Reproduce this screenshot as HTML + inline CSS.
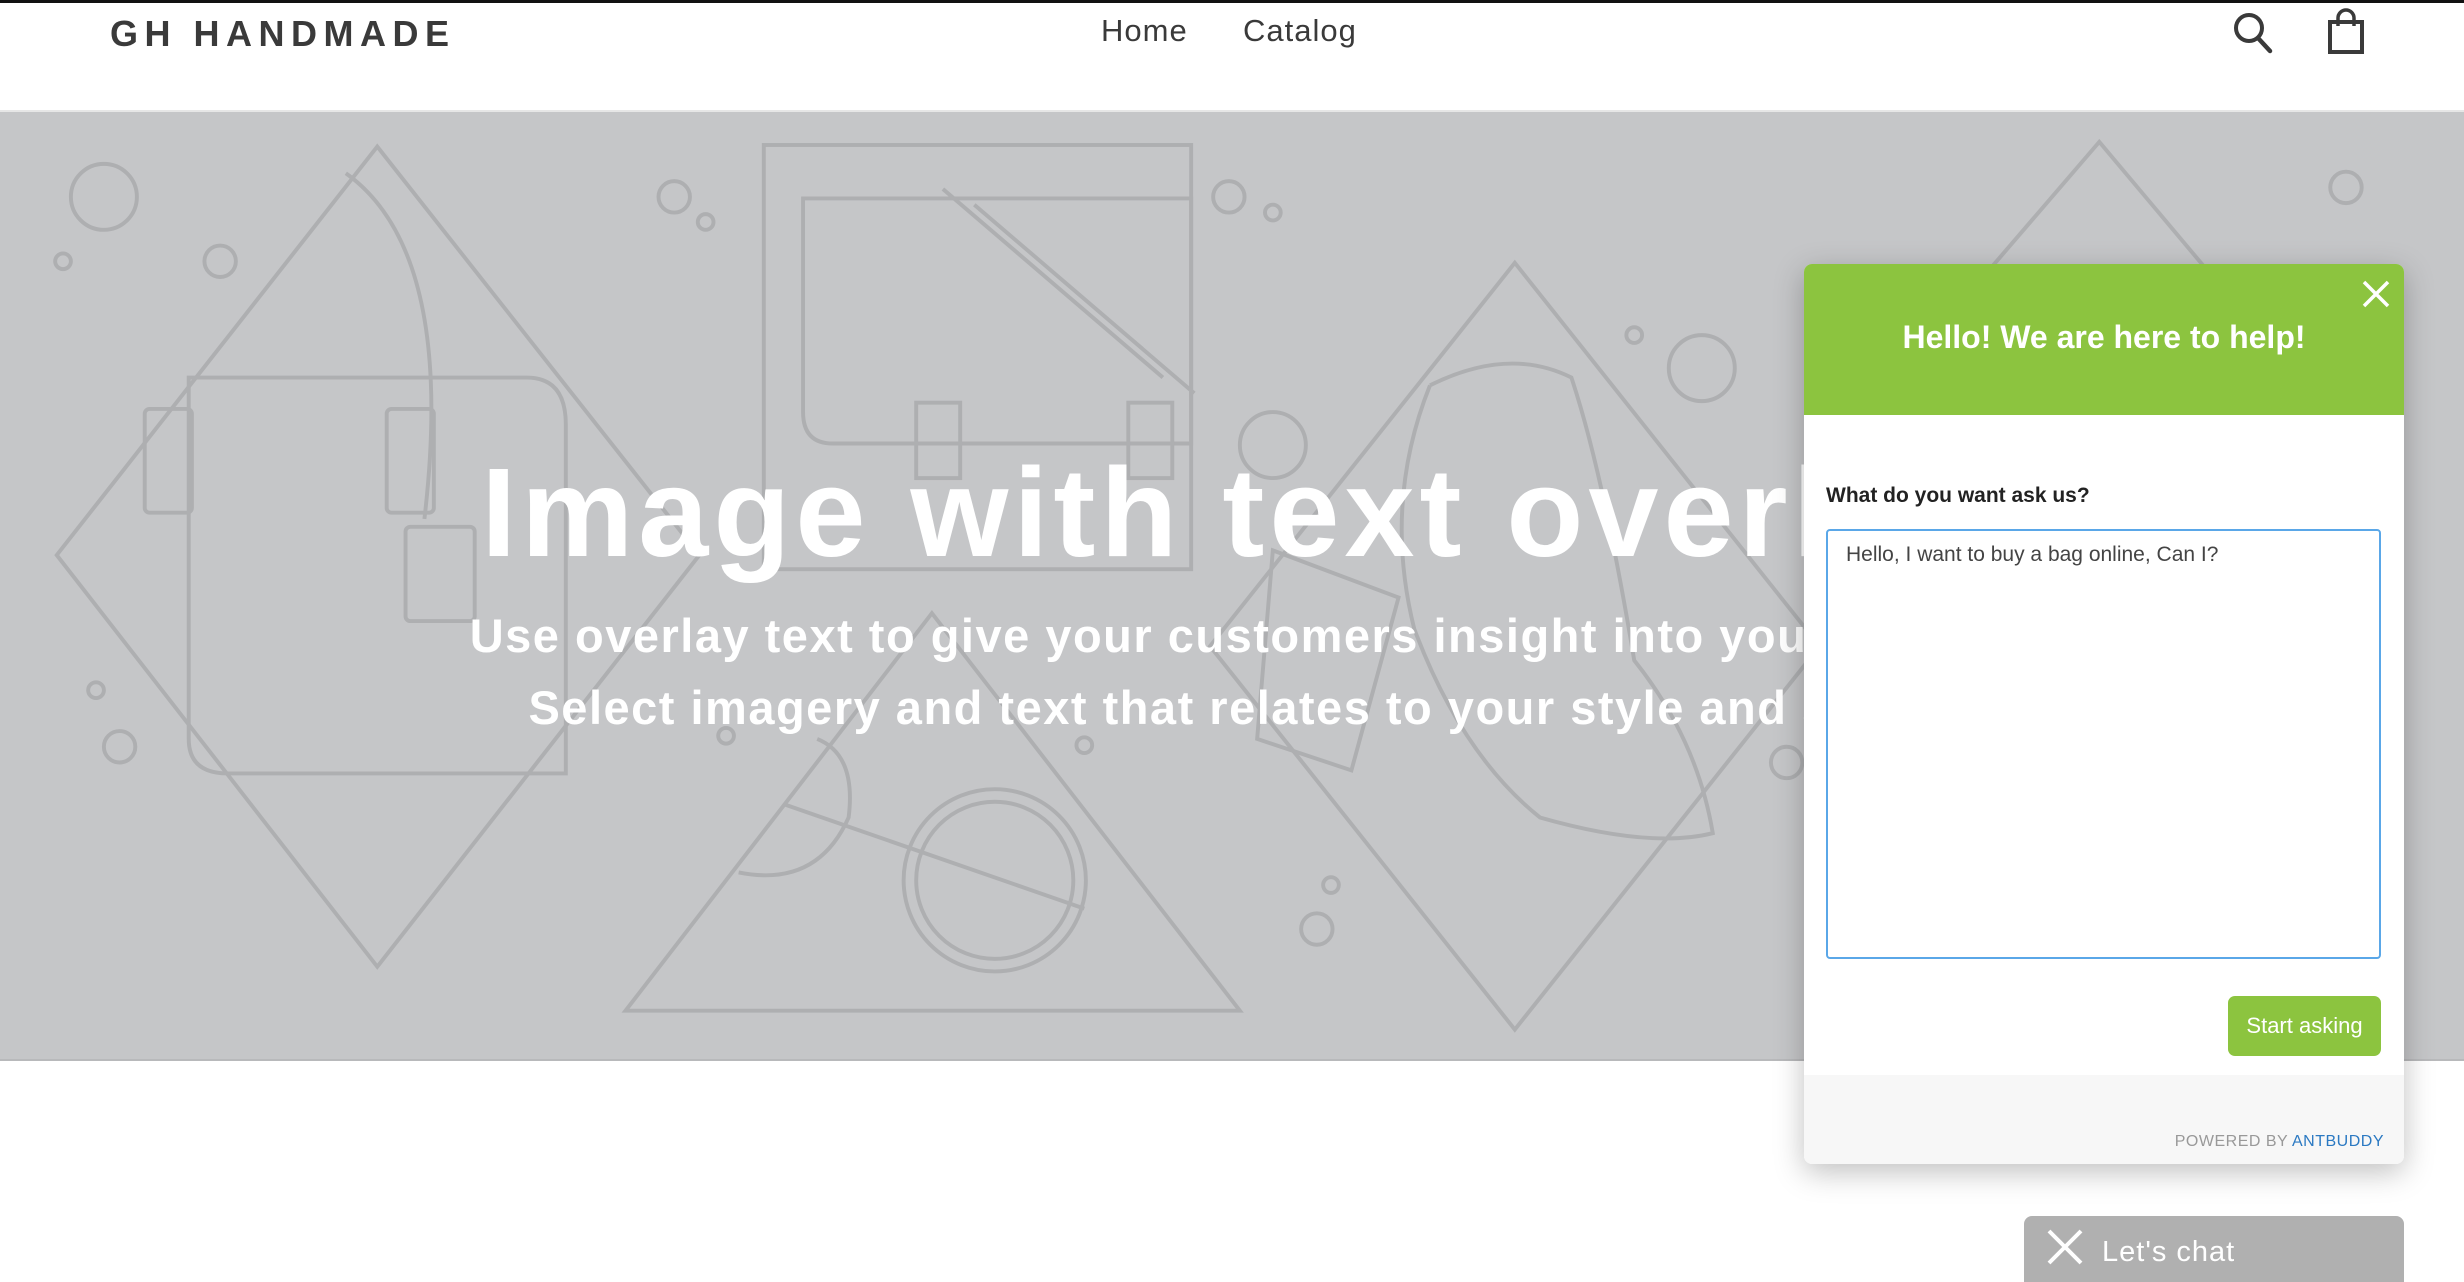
<!DOCTYPE html>
<html><head><meta charset="utf-8"><style>
*{margin:0;padding:0;box-sizing:border-box}
html,body{width:2464px;height:1282px;overflow:hidden;background:#fff;font-family:"Liberation Sans",sans-serif;position:relative}
.topbar{position:absolute;left:0;top:0;width:2464px;height:3px;background:#111}
.header{position:absolute;left:0;top:3px;width:2464px;height:109px;background:#fff;border-bottom:2px solid #e6e6e6}
.logo{position:absolute;left:110px;top:10px;font-size:36px;font-weight:bold;letter-spacing:6.5px;color:#3a3a3a}
.nav{position:absolute;top:10px;font-size:31px;color:#3a3a3a;letter-spacing:1px}
.hero{position:absolute;left:0;top:112px;width:2464px;height:949px;background:#c5c6c8;border-bottom:2px solid #b8b9bb;overflow:hidden}
.art{position:absolute;left:0;top:0}
.title{position:absolute;left:0;top:338px;width:2464px;text-align:center;color:#fff;font-size:126px;font-weight:bold;letter-spacing:5px;white-space:nowrap;line-height:1}
.sub{position:absolute;left:0;width:2464px;text-align:center;color:#fff;font-size:47px;font-weight:bold;letter-spacing:1.5px;white-space:nowrap}
.chat{position:absolute;left:1804px;top:264px;width:600px;height:900px;background:#fff;border-radius:8px;box-shadow:0 8px 30px rgba(0,0,0,.25);overflow:hidden}
.chead{height:151px;background:#8cc43f;color:#fff;font-weight:bold;font-size:32px;text-align:center;line-height:146px}
.close{position:absolute;right:12px;top:14px}
.label{position:absolute;left:22px;top:220px;font-size:21px;font-weight:bold;color:#222}
.ta{position:absolute;left:22px;top:265px;width:555px;height:430px;border:2px solid #5aa7e8;border-radius:4px;padding:12px 18px;font-size:21px;color:#444}
.btn{position:absolute;left:424px;top:732px;width:153px;height:60px;background:#8cc43f;border-radius:7px;color:#fff;font-size:22px;text-align:center;line-height:60px}
.foot{position:absolute;left:0;top:811px;width:600px;height:89px;background:#f7f7f7}
.pow{position:absolute;right:20px;top:58px;font-size:16px;color:#999;letter-spacing:.5px}
.pow span{color:#2b79c2}
.tab{position:absolute;left:2024px;top:1216px;width:380px;height:70px;background:#b0b0b0;border-radius:8px 8px 0 0;color:#fff;font-size:29px;letter-spacing:1px}
</style></head><body>
<div class="topbar"></div>
<div class="header">
 <div class="logo">GH HANDMADE</div>
 <div class="nav" style="left:1101px">Home</div>
 <div class="nav" style="left:1243px">Catalog</div>
 <svg style="position:absolute;left:2232px;top:7px" width="42" height="46" viewBox="0 0 42 46"><circle cx="17" cy="18" r="13" fill="none" stroke="#3a3a3a" stroke-width="4"/><line x1="26" y1="28" x2="38" y2="41" stroke="#3a3a3a" stroke-width="4.5" stroke-linecap="round"/></svg>
 <svg style="position:absolute;left:2326px;top:5px" width="40" height="46" viewBox="0 0 40 46"><path d="M4 14 H36 V44 H4 Z" fill="none" stroke="#3a3a3a" stroke-width="4"/><path d="M12 18 V10 a8 8 0 0 1 16 0 V18" fill="none" stroke="#3a3a3a" stroke-width="3.5"/></svg>
</div>
<div class="hero">
 <svg class="art" width="2464" height="949" viewBox="0 71 1568 604" fill="none" stroke="#aeafb1" stroke-width="2.5">
  <polygon points="240,93 445,353 240,615 36,353"/>
  <rect x="486" y="92" width="272" height="270"/>
  <polygon points="593,390 789,643 398,643"/>
  <polygon points="964,167 1158,411 964,655 770,411"/>
  <polygon points="1336,90 1420,190 1250,190"/>
  <path d="M120 240 H335 Q360 240 360 270 V492 H145 Q120 492 120 470 Z"/>
  <path d="M220 110 Q290 160 270 330"/>
  <rect x="92" y="260" width="30" height="66" rx="3"/><rect x="246" y="260" width="30" height="66" rx="3"/>
  <rect x="258" y="335" width="44" height="60" rx="3"/>
  <path d="M511 126 H758 V282 H530 Q511 282 511 262 Z"/>
  <rect x="583" y="256" width="28" height="48"/><rect x="718" y="256" width="28" height="48"/>
  <path d="M600 120 L740 240"/><path d="M620 130 L760 250"/>
  <circle cx="633" cy="560" r="58"/><circle cx="633" cy="560" r="50"/>
  <path d="M470 555 Q520 565 540 520 Q545 480 520 470"/><path d="M500 512 L690 578"/>
  <path d="M910 245 Q960 220 1000 240 Q1020 300 1040 420 Q1080 470 1090 530 Q1050 540 980 520 Q930 480 900 400 Q880 320 910 245"/>
  <path d="M810 350 L890 380 L860 490 L800 470 Z"/>
  <circle cx="66" cy="125" r="21"/><circle cx="140" cy="166" r="10"/><circle cx="40" cy="166" r="5"/>
  <circle cx="429" cy="125" r="10"/><circle cx="449" cy="141" r="5"/><circle cx="782" cy="125" r="10"/><circle cx="810" cy="135" r="5"/>
  <circle cx="1083" cy="234" r="21"/><circle cx="1040" cy="213" r="5"/><circle cx="810" cy="283" r="21"/>
  <circle cx="61" cy="439" r="5"/><circle cx="76" cy="475" r="10"/><circle cx="462" cy="468" r="5"/><circle cx="690" cy="474" r="5"/>
  <circle cx="847" cy="563" r="5"/><circle cx="838" cy="591" r="10"/><circle cx="1493" cy="119" r="10"/><circle cx="1137" cy="485" r="10"/>
 </svg>
 <div class="title">Image with text overlay</div>
 <div class="sub" style="top:496px">Use overlay text to give your customers insight into your brand.</div>
 <div class="sub" style="top:568px">Select imagery and text that relates to your style and story.</div>
</div>
<div class="chat">
 <div class="chead">Hello! We are here to help!</div>
 <svg class="close" width="32" height="32" viewBox="0 0 32 32"><path d="M4 4 L28 28 M28 4 L4 28" stroke="#fff" stroke-width="3.5"/></svg>
 <div class="label">What do you want ask us?</div>
 <div class="ta">Hello, I want to buy a bag online, Can I?</div>
 <div class="btn">Start asking</div>
 <div class="foot"><div class="pow">POWERED BY <span>ANTBUDDY</span></div></div>
</div>
<div class="tab">
 <svg style="position:absolute;left:22px;top:12px" width="38" height="38" viewBox="0 0 38 38"><path d="M3 3 L35 35 M35 3 L3 35" stroke="#fff" stroke-width="4"/></svg>
 <div style="position:absolute;left:78px;top:20px">Let's chat</div>
</div>
</body></html>
